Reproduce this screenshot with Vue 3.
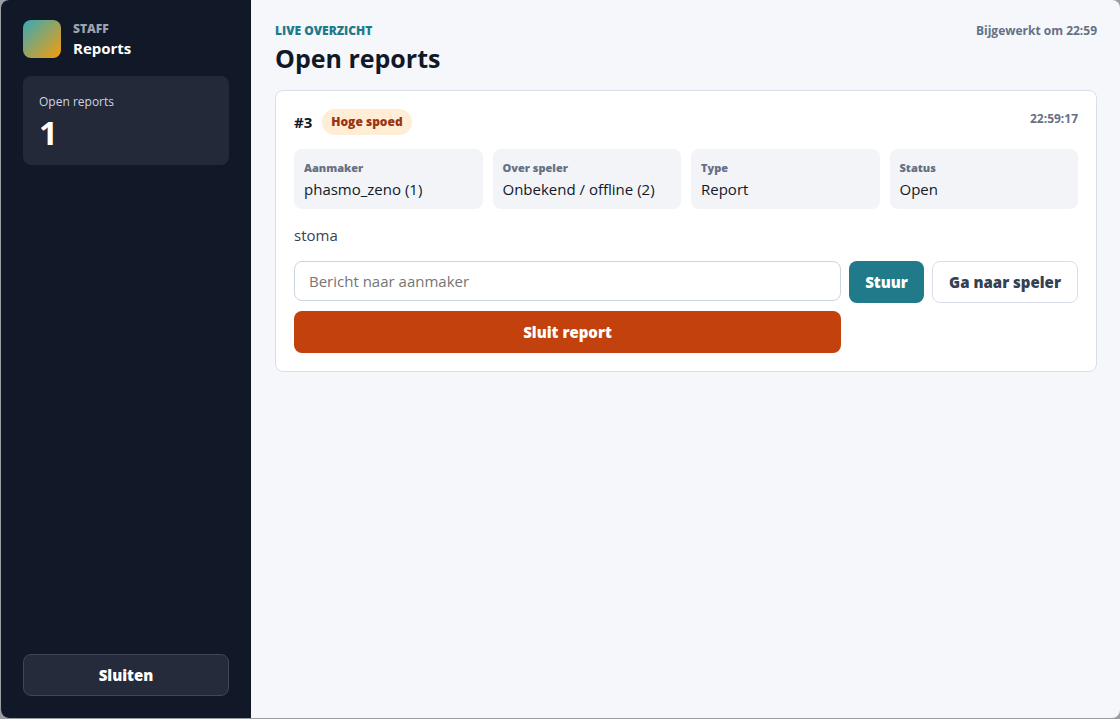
<template>
  <div class="shell">
    <aside class="sidebar">
      <div class="brand">
        <div class="brand-mark"></div>
        <div>
          <p class="brand-label">STAFF</p>
          <h2 class="brand-title">Reports</h2>
        </div>
      </div>
      <div class="stat">
        <span class="stat-label">Open reports</span>
        <strong class="stat-value">{{ reports.length }}</strong>
      </div>
      <button type="button" class="btn btn-close">Sluiten</button>
    </aside>

    <main class="content">
      <header class="topbar">
        <div>
          <p class="eyebrow">LIVE OVERZICHT</p>
          <h1 class="title">Open reports</h1>
        </div>
        <span class="muted updated">Bijgewerkt om {{ updatedAt }}</span>
      </header>

      <article v-for="report in reports" :key="report.id" class="report">
        <div class="report-head">
          <strong class="report-id">#{{ report.id }}</strong>
          <span class="pill">{{ report.priority }}</span>
          <time class="muted report-time">{{ report.time }}</time>
        </div>

        <dl class="details">
          <div v-for="field in report.fields" :key="field.label" class="detail">
            <dt>{{ field.label }}</dt>
            <dd>{{ field.value }}</dd>
          </div>
        </dl>

        <p class="message">{{ report.message }}</p>

        <form class="actions" @submit.prevent="report.reply = ''">
          <input
            v-model="report.reply"
            type="text"
            class="reply"
            placeholder="Bericht naar aanmaker"
            aria-label="Bericht naar aanmaker"
          />
          <button type="submit" class="btn btn-send">Stuur</button>
          <button type="button" class="btn btn-goto">Ga naar speler</button>
          <button type="button" class="btn btn-danger">Sluit report</button>
        </form>
      </article>
    </main>
  </div>
</template>

<script setup>
import { ref } from 'vue'

const updatedAt = ref('22:59')

const reports = ref([
  {
    id: 3,
    priority: 'Hoge spoed',
    time: '22:59:17',
    message: 'stoma',
    reply: '',
    fields: [
      { label: 'Aanmaker', value: 'phasmo_zeno (1)' },
      { label: 'Over speler', value: 'Onbekend / offline (2)' },
      { label: 'Type', value: 'Report' },
      { label: 'Status', value: 'Open' },
    ],
  },
])
</script>

<style>
body {
  background: #9a9da3;
}
</style>

<style scoped>
* {
  box-sizing: border-box;
}

p,
h1,
h2,
dl,
dd {
  margin: 0;
}

.shell {
  display: grid;
  grid-template-columns: 250px minmax(0, 1fr);
  height: calc(100vh - 1px);
  margin-left: 1px;
  border-radius: 8px;
  overflow: hidden;
  background: #f5f7fb;
  color: #111827;
  font-family: 'Segoe UI', 'Open Sans', 'Noto Sans', sans-serif;
  font-size: 15px;
  line-height: 20px;
}

.sidebar {
  display: flex;
  flex-direction: column;
  gap: 18px;
  padding: 20px 22px 22px;
  background: #111827;
  color: #fff;
}

.brand {
  display: flex;
  align-items: center;
  gap: 12px;
}

.brand-mark {
  width: 38px;
  height: 38px;
  border-radius: 8px;
  background: linear-gradient(135deg, #38a9b8, #f59e0b);
}

.brand-label {
  color: #9ca3af;
  font-size: 12px;
  font-weight: 800;
  line-height: 18px;
}

.brand-title {
  font-size: 15px;
  font-weight: 700;
  line-height: 20px;
}

.stat {
  display: flex;
  flex-direction: column;
  padding: 16px 16px 12px;
  border-radius: 8px;
  background: #232938;
}

.stat-label {
  color: #cbd5e1;
  font-size: 12px;
  line-height: 20px;
}

.stat-value {
  font-size: 33px;
  font-weight: 700;
  line-height: 41px;
}

.btn {
  height: 42px;
  padding: 0;
  border: 1px solid transparent;
  border-radius: 8px;
  color: #fff;
  font-family: inherit;
  font-size: 15px;
  font-weight: 800;
  cursor: pointer;
}

.btn-close {
  margin-top: auto;
  border-color: #414654;
  background: #252b3a;
}

.content {
  padding: 20px 23px 24px 24px;
}

.topbar {
  display: flex;
  justify-content: space-between;
  align-items: flex-start;
  margin-bottom: 16px;
}

.eyebrow {
  color: #217a8a;
  font-size: 12px;
  font-weight: 800;
  line-height: 22px;
}

.title {
  font-size: 25px;
  font-weight: 700;
  line-height: 32px;
}

.muted {
  color: #667085;
  font-size: 12px;
  font-weight: 700;
}

.updated {
  line-height: 22px;
}

.report {
  padding: 18px;
  border: 1px solid #d9dfea;
  border-radius: 8px;
  background: #fff;
}

.report-head {
  display: flex;
  align-items: center;
  gap: 10px;
  margin-bottom: 14px;
}

.report-id {
  font-size: 15px;
  font-weight: 700;
}

.pill {
  padding: 4px 9px;
  border-radius: 13px;
  background: #ffedd5;
  color: #9a3412;
  font-size: 12px;
  font-weight: 800;
  line-height: 18px;
}

.report-time {
  align-self: flex-start;
  margin-left: auto;
}

.details {
  display: grid;
  grid-template-columns: repeat(4, minmax(0, 1fr));
  gap: 10px;
}

.detail {
  padding: 10px 10px 8px;
  border-radius: 8px;
  background: #f2f4f8;
}

.detail dt {
  color: #667085;
  font-size: 11px;
  font-weight: 800;
  line-height: 18px;
}

.detail dd {
  line-height: 24px;
}

.message {
  margin: 14px 0;
  color: #374151;
  line-height: 24px;
}

.actions {
  display: grid;
  grid-template-columns: minmax(0, 1fr) 75px 146px;
  align-items: start;
  gap: 8px;
}

.reply {
  width: 100%;
  height: 40px;
  padding: 0 14px;
  border: 1px solid #cbd5e1;
  border-radius: 8px;
  background: #fff;
  color: #111827;
  font-family: inherit;
  font-size: 15px;
}

.reply::placeholder {
  color: #757575;
}

.btn-send {
  background: #217a8a;
}

.btn-goto {
  border-color: #d9dfea;
  background: #fff;
  color: #344054;
}

.btn-danger {
  background: #c2410c;
}
</style>
